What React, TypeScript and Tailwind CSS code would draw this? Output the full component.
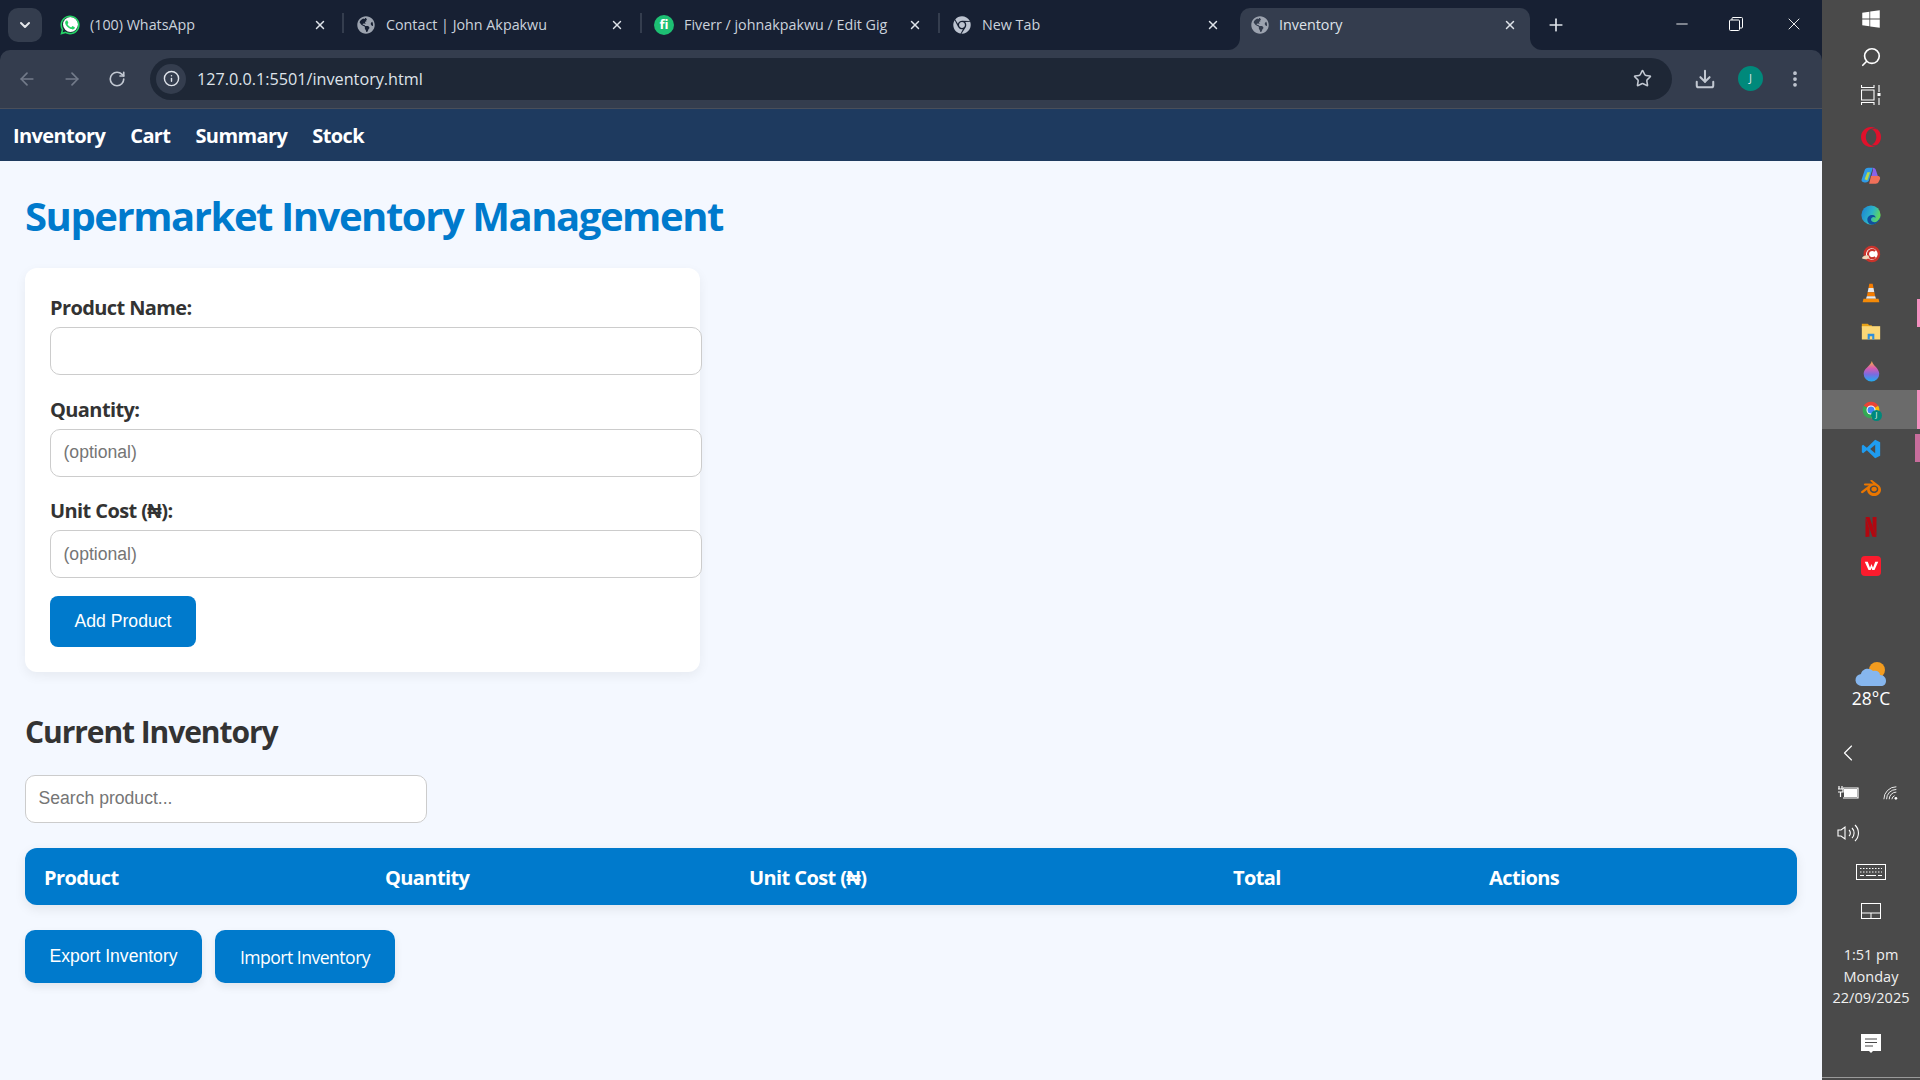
import { ChevronDown, X, Plus, ArrowLeft, ArrowRight, RotateCw, Info, Star, Download, EllipsisVertical, Minus, Search, ChevronLeft } from "lucide-react";
import { FaWhatsapp, FaGlobeAmericas, FaChrome, FaWindows } from "react-icons/fa";
import { SiOpera, SiBlender, SiNetflix } from "react-icons/si";
import type { ReactNode } from "react";

const tabs = [
  { title: "(100) WhatsApp", width: "w-[296px]", close: "mr-[17px]", icon: <span className="relative flex size-5 items-center justify-center"><span className="absolute size-[15px] rounded-full bg-white" /><FaWhatsapp className="relative size-[22px] text-[#25d366]" /></span> },
  { title: "Contact | John Akpakwu", width: "w-[298px]", close: "mr-[18px]", icon: <FaGlobeAmericas className="size-[18px] text-[#9ca3af]" /> },
  { title: "Fiverr / johnakpakwu / Edit Gig", width: "w-[298px]", close: "mr-[18px]", icon: <span className="flex size-5 items-center justify-center rounded-full bg-[#1dbf73] text-[13px] font-bold text-white">fi</span> },
  { title: "New Tab", width: "w-[300px]", close: "mr-[20px]", icon: <FaChrome className="size-[18px] text-[#bcc3d0]" /> },
];

const navLinks = ["Inventory", "Cart", "Summary", "Stock"];

const columns = ["Product", "Quantity", "Unit Cost (₦)", "Total", "Actions"];

const ChromeLogo = () => (
  <span className="relative block size-5">
    <svg viewBox="0 0 24 24" className="size-5">
      <path d="M12 12 3.34 7A10 10 0 0 1 20.66 7Z" fill="#ea4335" />
      <path d="M12 12 20.66 7A10 10 0 0 1 12 22Z" fill="#fbbc04" />
      <path d="M12 12 12 22A10 10 0 0 1 3.34 7Z" fill="#34a853" />
      <circle cx="12" cy="12" r="5.4" fill="#fff" />
      <circle cx="12" cy="12" r="4.2" fill="#4285f4" />
    </svg>
    <span className="absolute -bottom-[1px] -right-[1px] flex size-[11px] items-center justify-center rounded-full bg-[#00897b] text-[7px] text-white">J</span>
  </span>
);

const appIcons: { icon: ReactNode; active?: boolean; pin?: string }[] = [
  { icon: <SiOpera className="size-5 text-[#e0112b]" /> },
  {
    icon: (
      <svg viewBox="0 0 24 24" className="size-[22px]">
        <path d="M9 3h5l-4 13c-.5 2-2 3-4 3H5c-3 0-4-2-3-4l3-9c.5-2 2-3 4-3Z" fill="#2f9be8" />
        <path d="M14 3c2 0 3 1 3.5 3l2 6h-7L14 6Z" fill="#8a62e8" />
        <path d="M12 12h7c3 0 3.500 2 2.500 4l-1 2c-.5 1.500-2 2.500-3.500 2.500H10Z" fill="#f0705a" />
        <path d="M5 15.500 8 8h3l-3 9Z" fill="#b7d84c" />
      </svg>
    ),
  },
  {
    icon: (
      <svg viewBox="0 0 24 24" className="size-[22px]">
        <defs>
          <linearGradient id="edge" x1="0" y1="0" x2="1" y2="0.4">
            <stop offset="0" stopColor="#1b7fd6" />
            <stop offset="0.6" stopColor="#2bb3c8" />
            <stop offset="1" stopColor="#62d65b" />
          </linearGradient>
        </defs>
        <circle cx="12" cy="12" r="10.500" fill="url(#edge)" />
        <path d="M22.500 14c-1 5-5 8.500-9.500 8.500-3 0-5-2.500-5-5.500 0-3.500 3-5.500 6-5 2 .3 3 1.500 3 3-2-1.500-5-.5-5 2 0 2 2 3 4 3s4-2 6.500-6Z" fill="#104f9e" />
      </svg>
    ),
  },
  {
    icon: (
      <svg viewBox="0 0 24 24" className="size-5">
        <circle cx="13" cy="12" r="10" fill="#c9332b" />
        <circle cx="13" cy="12" r="7" fill="#fff" />
        <path d="M17 8.500a5 5 0 1 0 0 7" stroke="#c9332b" strokeWidth="2.500" fill="none" />
        <path d="M1 17c2-3 5-4 8-3l1 2c-2 3-6 3-9 1Z" fill="#f0d6b8" />
      </svg>
    ),
  },
  {
    icon: (
      <svg viewBox="0 0 24 24" className="size-5">
        <path d="M10 1h4l1 5H9Z" fill="#f57c00" />
        <path d="M9 6h6l1 5H8Z" fill="#e8e8e8" />
        <path d="M8 11h8l1 5H7Z" fill="#f57c00" />
        <path d="M7 16h10l1 3H6Z" fill="#e8e8e8" />
        <path d="M3 19h18l1 4H2Z" fill="#f58a07" />
      </svg>
    ),
  },
  {
    icon: (
      <svg viewBox="0 0 24 24" className="size-5">
        <path d="M1 2h7l2 2h3v3H1Z" fill="#e6a117" />
        <path d="M1 5h22v16H1Z" fill="#fbd776" />
        <path d="M8 21v-7h8v7h-2.500v-4h-3v4Z" fill="#2f8fdc" />
      </svg>
    ),
    pin: "h-[28px] w-[3px] bg-[#f48fbf] top-[-13px]",
  },
  {
    icon: (
      <svg viewBox="0 0 24 24" className="size-[22px]">
        <defs>
          <linearGradient id="paint" x1="0.500" y1="0" x2="0.500" y2="1">
            <stop offset="0" stopColor="#f6b73c" />
            <stop offset="0.35" stopColor="#d85bb0" />
            <stop offset="0.65" stopColor="#7a6be0" />
            <stop offset="1" stopColor="#1eaef0" />
          </linearGradient>
        </defs>
        <path d="M13 1c1 5 8 8 8 14a8.500 8.500 0 0 1-17 0C4 9 11 7 13 1Z" fill="url(#paint)" />
      </svg>
    ),
  },
  { icon: <ChromeLogo />, active: true, pin: "h-full w-[3px] bg-[#f48fbf] top-0" },
  {
    icon: (
      <svg viewBox="0 0 24 24" className="size-5">
        <path d="M17 1 23 4V20L17 23 7 13.500 2.500 17 1 16V8L2.500 7 7 10.500Z" fill="#1f9cf0" />
        <path d="M17 7 11 12 17 17Z" fill="#4a4a4a" />
      </svg>
    ),
    pin: "h-[28px] w-[5px] bg-[#c86d9c] top-[5px]",
  },
  { icon: <SiBlender className="size-5 text-[#ea7600]" /> },
  { icon: <SiNetflix className="size-5 text-[#b20710]" /> },
  {
    icon: (
      <span className="flex size-5 items-center justify-center rounded-[4px] bg-[#fb1b2d]">
        <svg viewBox="0 0 20 20" className="size-[15px]">
          <path d="M1 5h4l3 8 2-5 2 5 3-8h4l-5 11h-3l-1-3-1 3H6Z" fill="#fff" />
        </svg>
      </span>
    ),
  },
];

const Field = ({ label, placeholder }: { label: string; placeholder?: string }) => (
  <div className="flex flex-col">
    <label className="mb-[6px] text-[20px] leading-[26px] font-bold tracking-[-0.03em] text-[#333]">{label}</label>
    <input
      placeholder={placeholder}
      className="h-[48px] w-[652px] rounded-[10px] border border-[#ccc] bg-white px-[12.500px] font-['Liberation_Sans',sans-serif] text-[17.6px] tracking-normal placeholder:text-[#757575]"
    />
  </div>
);

export default function App() {
  return (
    <div className="flex h-screen w-screen overflow-hidden font-['Open_Sans',sans-serif]">
      <div className="flex min-w-0 flex-1 flex-col bg-[#172033]">
        {/* tab strip */}
        <div className="flex h-[50px] shrink-0 items-end pl-[8px]">
          <div className="mb-[8px] flex size-[34px] shrink-0 items-center justify-center rounded-[10px] bg-[#343d4e] text-[#e5e7eb]">
            <ChevronDown className="size-4" strokeWidth={3} />
          </div>
          <div className="ml-[6px] flex h-[42px]">
            {tabs.map((tab, i) => (
              <div key={tab.title} className={`relative flex h-[42px] items-center pb-[9px] pl-[12px] ${tab.width}`}>
                <span className="flex size-5 shrink-0 items-center justify-center">{tab.icon}</span>
                <span className="ml-[10px] flex-1 truncate text-[14.3px] text-[#cbd2dc]">{tab.title}</span>
                <X className={`size-[14px] shrink-0 text-[#dfe3ea] ${tab.close}`} strokeWidth={2.5} />
                {i < 3 && <span className="absolute right-0 top-[5px] h-[20px] w-[2px] bg-[#343d4e]" />}
              </div>
            ))}
            <div className="relative flex h-[42px] w-[290px] items-center rounded-t-[10px] bg-[#343d4e] pb-[9px] pl-[11px]">
              <span className="absolute -left-[12px] bottom-0 size-[12px] bg-[#343d4e]"><span className="block size-full rounded-br-[12px] bg-[#172033]" /></span>
              <span className="absolute -right-[12px] bottom-0 size-[12px] bg-[#343d4e]"><span className="block size-full rounded-bl-[12px] bg-[#172033]" /></span>
              <FaGlobeAmericas className="size-[18px] shrink-0 text-[#9ca3af]" />
              <span className="ml-[10px] flex-1 text-[14.3px] text-[#dfe3ea]">Inventory</span>
              <X className="mr-[13px] size-[14px] shrink-0 text-[#dfe3ea]" strokeWidth={2.5} />
            </div>
            <div className="ml-[16px] flex h-[33px] items-center text-[#dfe3ea]">
              <Plus className="size-[20px]" strokeWidth={2} />
            </div>
          </div>
          <div className="ml-auto mb-[10px] flex h-[32px] items-center pr-[18px] text-white">
            <Minus className="size-[18px]" strokeWidth={1.2} />
            <svg viewBox="0 0 14 14" className="ml-[38px] size-[14px]" fill="none" stroke="#fff" strokeWidth="1">
              <rect x="0.500" y="3" width="10" height="10.500" rx="1" />
              <path d="M3 3V1.500A1 1 0 0 1 4 .5h8.500a1 1 0 0 1 1 1V10a1 1 0 0 1-1 1H10.500" />
            </svg>
            <X className="ml-[41px] size-[20px]" strokeWidth={1.1} />
          </div>
        </div>

        {/* toolbar */}
        <div className="flex h-[59px] shrink-0 items-center rounded-t-[10px] border-b border-[#4a4f5a] bg-[#343d4e] pb-[1px]">
          <div className="flex w-[150px] shrink-0 items-center pl-[17px] text-[#737b8a]">
            <ArrowLeft className="size-5" />
            <ArrowRight className="ml-[25px] size-5" />
            <RotateCw className="ml-[26px] size-[18px] text-[#c2c8d2]" strokeWidth={2.2} />
          </div>
          <div className="flex h-[42px] flex-1 items-center rounded-full bg-[#1e2736] pl-[6px] pr-[20px]">
            <span className="flex size-[30px] items-center justify-center rounded-full bg-[#343d4e] text-[#dfe3ea]">
              <Info className="size-[17px]" strokeWidth={2} />
            </span>
            <span className="ml-[11px] flex-1 pt-[1px] text-[16.2px] text-[#dfe3ea]">127.0.0.1:5501/inventory.html</span>
            <Star className="size-[19px] text-[#c2c8d2]" strokeWidth={2} />
          </div>
          <div className="flex w-[150px] shrink-0 items-center pl-[22px] text-[#c2c8d2]">
            <Download className="size-[22px]" strokeWidth={2.2} />
            <span className="ml-[22px] flex size-[25px] items-center justify-center rounded-full bg-[#00897b] text-[11px] text-[#dfe3ea]">J</span>
            <EllipsisVertical className="ml-[22px] size-[20px]" strokeWidth={2.5} />
          </div>
        </div>

        {/* page nav */}
        <nav className="flex h-[52px] shrink-0 items-center gap-[25px] bg-[#1e3a5f] pl-[13px] pt-[2px]">
          {navLinks.map((link) => (
            <a key={link} className="text-[20px] font-bold tracking-[-0.03em] text-white">{link}</a>
          ))}
        </nav>

        {/* page */}
        <main className="flex flex-1 flex-col bg-[#f4f8ff] px-[25px] pt-[28px]">
          <h1 className="text-[40px] leading-[54px] font-bold tracking-[-0.036em] text-[#007acc]">Supermarket Inventory Management</h1>

          <div className="relative mt-[25px] flex h-[404px] w-[675px] flex-col rounded-[12px] bg-white pl-[25px] pt-[27px] shadow-[0_4px_12px_rgba(0,0,0,0.06)]">
            <div className="flex flex-col gap-[21.500px]">
              <Field label="Product Name:" />
              <Field label="Quantity:" placeholder="(optional)" />
              <Field label="Unit Cost (₦):" placeholder="(optional)" />
            </div>
            <button className="mt-[18px] h-[51px] w-[146px] rounded-[8px] bg-[#007acc] font-['Liberation_Sans',sans-serif] text-[17.6px] text-white">Add Product</button>
          </div>

          <h2 className="mt-[39px] text-[30px] leading-[41px] font-bold tracking-[-0.036em] text-[#333]">Current Inventory</h2>

          <input
            placeholder="Search product..."
            className="mt-[23px] h-[48px] w-[402px] rounded-[10px] border border-[#ccc] bg-white px-[12.500px] pb-[2px] font-['Liberation_Sans',sans-serif] text-[17.6px] placeholder:text-[#757575]"
          />

          <div className="mt-[25px] grid h-[57px] w-[1772px] grid-cols-[341px_364px_484px_256px_327px] items-center rounded-[12px] bg-[#007acc] pt-[2px] shadow-[0_4px_12px_rgba(0,0,0,0.08)]">
            {columns.map((col) => (
              <span key={col} className="pl-[19px] text-[20px] font-bold tracking-[-0.03em] text-white">{col}</span>
            ))}
          </div>

          <div className="mt-[25px] flex gap-[13px]">
            <button className="h-[53px] w-[177px] rounded-[10px] bg-[#007acc] font-['Liberation_Sans',sans-serif] text-[17.6px] text-white shadow-[0_4px_8px_rgba(0,0,0,0.08)]">Export Inventory</button>
            <button className="h-[53px] w-[180px] rounded-[10px] bg-[#007acc] pt-[2px] text-[17.6px] tracking-[-0.03em] text-white shadow-[0_4px_8px_rgba(0,0,0,0.08)]">Import Inventory</button>
          </div>
        </main>
      </div>

      {/* windows taskbar */}
      <aside className="flex w-[98px] shrink-0 flex-col items-center bg-[#4a4a4a] text-white">
        <div className="flex h-[38px] w-full shrink-0 items-center justify-center"><FaWindows className="size-5" /></div>
        <div className="flex h-[38px] w-full shrink-0 items-center justify-center"><Search className="size-[22px] -scale-x-100" strokeWidth={1.8} /></div>
        <div className="flex h-[38px] w-full shrink-0 items-center justify-center">
          <svg viewBox="0 0 20 20" className="size-5" fill="none" stroke="#fff" strokeWidth="1.100">
            <path d="M0.500 0V2.500H13V0M0.500 20V17.500H13V20M.5 5H13V15H.5ZM18 0V7M18 13V20" />
            <rect x="16.500" y="8" width="3" height="3" fill="#fff" stroke="none" />
          </svg>
        </div>
        <div className="flex w-full shrink-0 flex-col pt-[3px]">
          {appIcons.map((app, i) => (
            <div key={i} className={`relative flex h-[39px] w-full shrink-0 items-center justify-center ${app.active ? "bg-[#6b6b6b]" : ""}`}>
              {app.icon}
              {app.pin && <span className={`absolute right-0 ${app.pin}`} />}
            </div>
          ))}
        </div>

        <div className="mt-[76px] flex flex-col items-center">
          <svg viewBox="0 0 32 26" className="h-[26px] w-[32px]">
            <circle cx="22" cy="9" r="8" fill="#f39c1f" />
            <path d="M7 25a6 6 0 0 1-1-12c1-5 8-7 12-3 4-1 7 1 7 4 4 0 6 3 6 6s-2 5-5 5Z" fill="#86b6ee" />
          </svg>
          <span className="mt-[1px] text-[17.500px] leading-[20px]">28°C</span>
        </div>

        <div className="mt-[25px] flex h-[40px] w-full shrink-0 items-center pl-[12px]"><ChevronLeft className="size-7" strokeWidth={1} /></div>
        <div className="flex h-[40px] w-full shrink-0 items-center justify-between pl-[15px] pr-[21px] text-white">
          <svg viewBox="0 0 22 14" className="h-[14px] w-[22px]" fill="none" stroke="#fff" strokeWidth="1.200">
            <path d="M2 0v3M5 0v3M1 3h5v3H1M3.500 6v5M6 2h15v10H6" />
            <rect x="7" y="3" width="13" height="8" fill="#fff" stroke="none" />
          </svg>
          <svg viewBox="0 0 18 16" className="h-[16px] w-[16px]" fill="none" stroke="#fff" strokeWidth="1">
            <path d="M1 15A14 14 0 0 1 15 1M4 15A11 11 0 0 1 15 4M7 15a8 8 0 0 1 8-8M10 15a5 5 0 0 1 3-4" />
            <circle cx="14.500" cy="14" r="1.500" fill="#fff" stroke="none" />
          </svg>
        </div>
        <div className="flex h-[39px] w-full shrink-0 items-center pl-[15px]">
          <svg viewBox="0 0 22 18" className="h-[18px] w-[22px]" fill="none" stroke="#fff" strokeWidth="1.100">
            <path d="M1 6h3l4-3v12l-4-3H1ZM12 6a4 4 0 0 1 0 6M15 4a7 7 0 0 1 0 10M18 1a11 11 0 0 1 0 16" />
          </svg>
        </div>
        <div className="flex h-[39px] w-full shrink-0 items-center justify-center">
          <svg viewBox="0 0 30 16" className="h-[16px] w-[30px]" fill="none" stroke="#fff" strokeWidth="1">
            <rect x=".5" y=".5" width="29" height="15" />
            <path d="M4 4.500h22M4 8h22" strokeDasharray="1.500 1.500" />
            <path d="M4 11.500h4M10 11.500h10M22 11.500h4" />
          </svg>
        </div>
        <div className="flex h-[39px] w-full shrink-0 items-center justify-center">
          <svg viewBox="0 0 20 16" className="h-[16px] w-[20px]" fill="none" stroke="#fff" strokeWidth="1">
            <rect x=".5" y=".5" width="19" height="15" />
            <path d="M.5 10h19M10 10v6" />
          </svg>
        </div>
        <div className="mt-[14px] flex flex-col items-center text-[14.5px] leading-[21.5px] text-[#f0f0f0]">
          <span>1:51 pm</span>
          <span>Monday</span>
          <span>22/09/2025</span>
        </div>
        <div className="mt-[24px] flex h-[22px] shrink-0 items-center justify-center">
          <svg viewBox="0 0 20 20" className="size-5">
            <path d="M0 0H20V17H12L10 19 8 17H0Z" fill="#fff" />
            <path d="M4 5H16M4 8.500H16M4 12H12" stroke="#4a4a4a" strokeWidth="1" />
          </svg>
        </div>
        <div className="mt-auto mb-[2px] h-[1px] w-full bg-[#9a9a9a]" />
      </aside>
    </div>
  );
}
